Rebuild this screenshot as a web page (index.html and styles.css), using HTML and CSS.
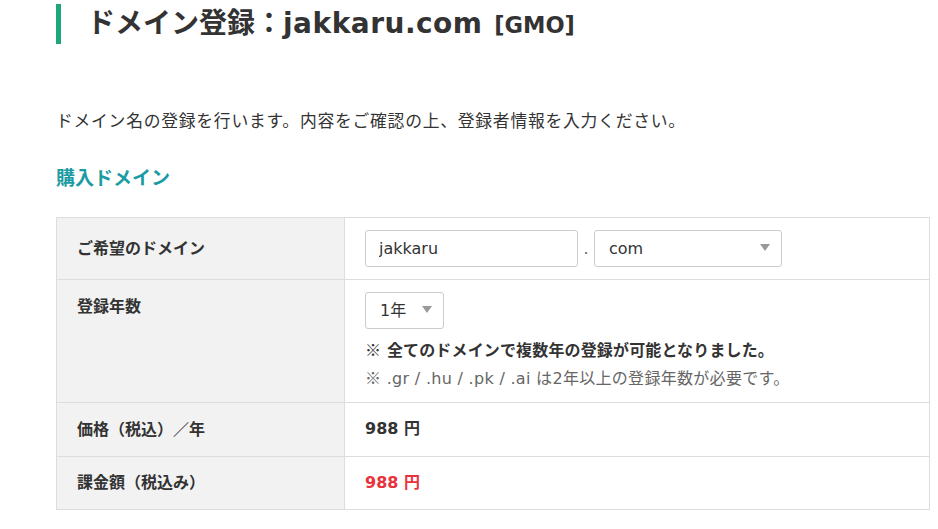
FILE: index.html
```html
<!DOCTYPE html>
<html lang="ja">
<head>
    <meta charset="UTF-8">
    <title>ドメイン登録 : jakkaru.com [GMO]</title>
    <link rel="stylesheet" href="styles.css">
</head>
<body>

    <div class="container">
        <h1 class="page-title">ドメイン登録：<span class="domain">jakkaru.com</span> <span class="sub">[GMO]</span></h1>

        <p class="lead">ドメイン名の登録を行います。内容をご確認の上、登録者情報を入力ください。</p>

        <h2 class="section-title">購入ドメイン</h2>

        <table class="form-table">
            <tr>
                <th>ご希望のドメイン</th>
                <td class="domain-cell">
                    <div class="domain-row">
                        <input type="text" class="text-input" value="jakkaru">
                        <span class="dot">.</span>
                        <div class="select select-tld">
                            <span>com</span>
                        </div>
                    </div>
                </td>
            </tr>
            <tr>
                <th class="top">登録年数</th>
                <td class="year-cell">
                    <div class="select select-year">
                        <span>1年</span>
                    </div>
                    <p class="note-strong"><span class="mark">※</span> 全てのドメインで複数年の登録が可能となりました。</p>
                    <p class="note"><span class="mark">※</span> .gr / .hu / .pk / .ai は2年以上の登録年数が必要です。</p>
                </td>
            </tr>
            <tr class="price-row">
                <th>価格（税込）／年</th>
                <td class="price">988 円</td>
            </tr>
            <tr>
                <th>課金額（税込み）</th>
                <td class="price total">988 円</td>
            </tr>
        </table>
    </div>

</body>
</html>
```

FILE: styles.css
```css
body {
    margin: 0;
    font-family: "DejaVu Sans", "Noto Sans CJK JP", sans-serif;
    color: #333;
    background: #fff;
}
.container {
    width: 874px;
    padding-left: 56px;
}
.page-title {
    margin: 4px 0 0;
    height: 40px;
    line-height: 40px;
    border-left: 5px solid #1ea67e;
    padding-left: 26px;
    font-size: 28px;
    font-weight: bold;
    color: #333;
}
.page-title .domain {
    letter-spacing: 0.5px;
}
.page-title .sub {
    font-size: 22.5px;
    margin-left: 2px;
}
.lead {
    margin: 63px 0 0;
    font-size: 16.8px;
    line-height: 28px;
    letter-spacing: 0.76px;
}
.section-title {
    margin: 29px 0 0;
    font-size: 19px;
    line-height: 28px;
    color: #1b9ba3;
}
.form-table {
    margin-top: 25px;
    width: 874px;
    border-collapse: collapse;
    font-size: 16px;
}
.form-table th,
.form-table td {
    border: 1px solid #ddd;
    padding: 12px 20px;
    line-height: 28px;
    text-align: left;
    vertical-align: middle;
}
.form-table th {
    width: 247px;
    background: #f2f2f2;
    font-weight: bold;
}
.form-table th.top {
    vertical-align: top;
    padding-top: 13px;
}
.domain-cell {
    padding-bottom: 11px;
}
.year-cell {
    padding-top: 11px;
}
.price-row td {
    padding-bottom: 13px;
}
.domain-row {
    display: flex;
    align-items: center;
    height: 37px;
}
.text-input {
    box-sizing: border-box;
    width: 213px;
    height: 37px;
    margin: 0;
    padding: 0 13px;
    border: 1px solid #ccc;
    border-radius: 3px;
    font-family: inherit;
    font-size: 16px;
    color: #333;
}
.dot {
    width: 16px;
    text-align: center;
    color: #666;
}
.select {
    position: relative;
    box-sizing: border-box;
    height: 37px;
    line-height: 35px;
    padding-left: 14px;
    border: 1px solid #ccc;
    border-radius: 3px;
    background: #fff;
}
.select::after {
    content: "";
    position: absolute;
    right: 11px;
    top: 13px;
    border-left: 5px solid transparent;
    border-right: 5px solid transparent;
    border-top: 7px solid #999;
}
.select-tld {
    width: 188px;
}
.select-year {
    width: 79px;
}
.mark {
    font-family: "Noto Sans CJK JP", sans-serif;
}
.note-strong {
    margin: 6px 0 0;
    height: 28px;
    font-weight: bold;
    line-height: 28px;
    letter-spacing: 0.15px;
}
.note {
    margin: 0;
    height: 27px;
    font-size: 16px;
    line-height: 28px;
    letter-spacing: 0.3px;
    color: #666;
}
.price {
    font-weight: bold;
}
.price.total {
    color: #e8333c;
}
```
